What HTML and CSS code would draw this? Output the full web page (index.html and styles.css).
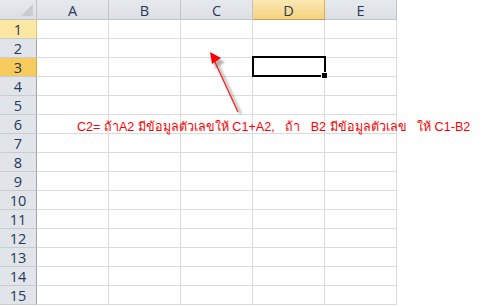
FILE: index.html
```html
<!DOCTYPE html>
<html lang="th">
<head>
    <meta charset="UTF-8">
    <title>Sheet1</title>
    <link rel="stylesheet" href="styles.css">
</head>
<body>
    <div class="sheet">
        <div class="grid" id="grid"></div>

        <!-- active cell D3 -->
        <div class="selection"><span class="handle"></span></div>

        <svg class="arrow" width="485" height="307" viewBox="0 0 485 307">
            <defs>
                <filter id="soft" x="-50%" y="-50%" width="200%" height="200%">
                    <feGaussianBlur stdDeviation="1.3"/>
                </filter>
            </defs>
            <g filter="url(#soft)" opacity="0.55">
                <line x1="241" y1="114" x2="216" y2="60" stroke="#777" stroke-width="2"/>
                <polygon points="213,56 225,62 215,69" fill="#777"/>
            </g>
            <line x1="238" y1="112" x2="214" y2="60" stroke="#ff1a1a" stroke-width="1.3"/>
            <polygon points="210,52 221,58 212,64" fill="#ff0000"/>
        </svg>

        <p class="note">C2= ถ้าA2 มีข้อมูลตัวเลขให้ C1+A2, &nbsp; ถ้า &nbsp; B2 มีข้อมูลตัวเลข &nbsp; ให้ C1-B2</p>
    </div>

    <script>
        const grid = document.getElementById('grid');
        const cols = ['A', 'B', 'C', 'D', 'E'];
        const activeCol = 'D';

        const corner = document.createElement('div');
        corner.className = 'head corner';
        grid.appendChild(corner);

        cols.forEach(c => {
            const h = document.createElement('div');
            h.className = 'head col' + (c === activeCol ? ' active' : '');
            h.textContent = c;
            grid.appendChild(h);
        });

        for (let r = 1; r <= 15; r++) {
            const rh = document.createElement('div');
            rh.className = 'head row';
            if (r === 1) rh.classList.add('hover');
            if (r === 3) rh.classList.add('active');
            rh.textContent = r;
            grid.appendChild(rh);
            cols.forEach(() => {
                const cell = document.createElement('div');
                cell.className = 'cell';
                grid.appendChild(cell);
            });
        }
    </script>
</body>
</html>
```

FILE: styles.css
```css
* {
    margin: 0;
    padding: 0;
    box-sizing: border-box;
}

body {
    background: #fff;
    font-family: "Liberation Sans", Arial, sans-serif;
    overflow: hidden;
}

.sheet {
    position: relative;
    width: 485px;
    height: 307px;
    overflow: hidden;
}

.grid {
    display: grid;
    grid-template-columns: 37px repeat(5, 72px);
    grid-template-rows: 20px;
    grid-auto-rows: 19px;
    width: 397px;
}

.cell {
    border-right: 1px solid #d9dbde;
    border-bottom: 1px solid #d9dbde;
}

.head {
    display: flex;
    align-items: center;
    justify-content: center;
    font-family: "Open Sans", "Liberation Sans", sans-serif;
    font-size: 14.5px;
    color: #26395a;
    background: linear-gradient(#e6e9ee, #dcdfe4);
    border-right: 1px solid #bfc4ca;
    border-bottom: 1px solid #bfc4ca;
}

.head.col {
    padding-top: 1px;
}

.head.row {
    background: #e1e4e9;
    border-bottom-color: #c7ccd3;
    border-right-color: #9ea4ac;
    padding-top: 1px;
}

.head.col.active {
    background: linear-gradient(#fbe8b4, #f6d37d);
    border-right-color: #d9b056;
    border-bottom-color: #c3a15d;
}

.head.row.hover {
    background: #fde8a3;
    border-right-color: #e8c86b;
}

.head.row.active {
    background: #f6ca5c;
    border-right-color: #d9a93b;
}

.corner {
    position: relative;
}

.corner::after {
    content: "";
    position: absolute;
    right: 3px;
    bottom: 3px;
    border-left: 12px solid transparent;
    border-bottom: 12px solid #c9ccd1;
}

.selection {
    position: absolute;
    left: 252px;
    top: 56px;
    width: 74px;
    height: 21px;
    border: 2px solid #000;
}

.handle {
    position: absolute;
    right: -4px;
    bottom: -4px;
    width: 5px;
    height: 5px;
    background: #000;
    border: 1px solid #fff;
    box-sizing: content-box;
}

.arrow {
    position: absolute;
    left: 0;
    top: 0;
    pointer-events: none;
}

.note {
    position: absolute;
    left: 77px;
    top: 117px;
    white-space: nowrap;
    font-family: Tahoma, "Liberation Sans", sans-serif;
    font-size: 12.6px;
    color: #ff0000;
}
```
